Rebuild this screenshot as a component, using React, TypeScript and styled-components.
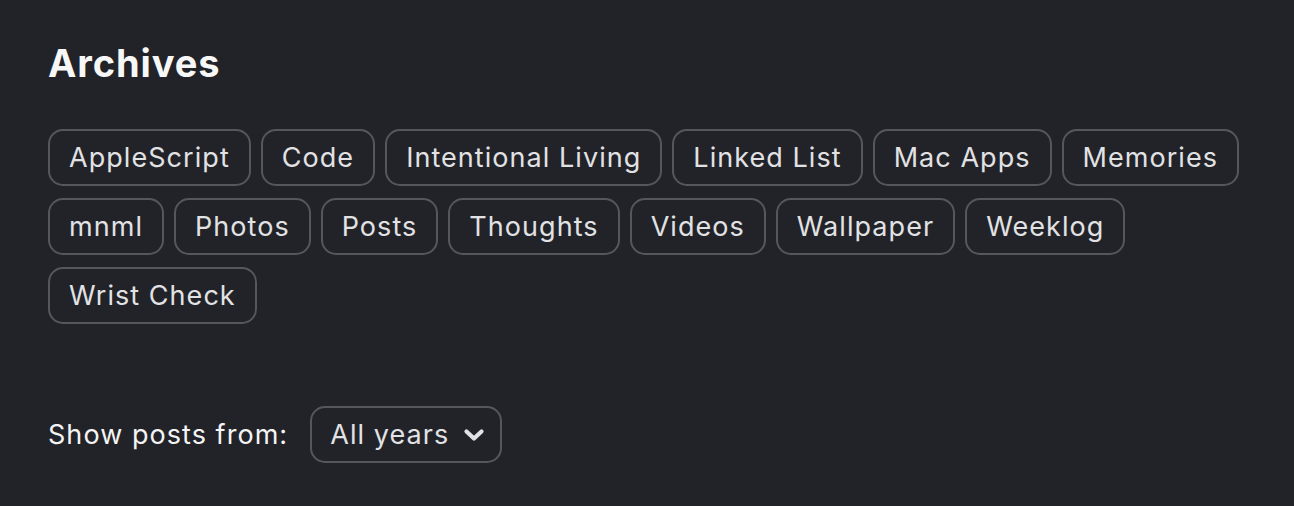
import styled, { createGlobalStyle } from 'styled-components';

const GlobalStyle = createGlobalStyle`
  html, body {
    margin: 0;
    padding: 0;
    background: #212329;
  }
  body {
    font-family: Inter, "Noto Sans", sans-serif;
  }
`;

const Page = styled.div`
  padding: 40px 48px 40px 48px;
  min-height: 506px;
  box-sizing: border-box;
  background: #212329;
`;

const Title = styled.h2`
  margin: 0 0 43px 0;
  font-size: 38px;
  font-weight: 700;
  letter-spacing: 0.9px;
  color: #f7f7f7;
  line-height: 46px;
`;

const TagList = styled.div`
  display: flex;
  flex-wrap: wrap;
  gap: 12px 10px;
  max-width: 1198px;
`;

const Tag = styled.a`
  display: inline-flex;
  align-items: center;
  height: 57px;
  box-sizing: border-box;
  padding: 0 19px;
  border: 2px solid #54575e;
  border-radius: 15px;
  color: #e2e2e4;
  font-size: 27px;
  letter-spacing: 1.05px;
  text-decoration: none;
`;

const FilterRow = styled.div`
  display: flex;
  align-items: center;
  gap: 22px;
  margin-top: 82px;
`;

const Label = styled.span`
  font-size: 27px;
  letter-spacing: 1.05px;
  color: #f4f4f4;
`;

const Select = styled.div`
  display: inline-flex;
  align-items: center;
  gap: 14px;
  height: 57px;
  box-sizing: border-box;
  padding: 0 15px 0 18px;
  border: 2px solid #54575e;
  border-radius: 15px;
  color: #e2e2e4;
  font-size: 27px;
  letter-spacing: 1.05px;
`;

const tags = [
  'AppleScript',
  'Code',
  'Intentional Living',
  'Linked List',
  'Mac Apps',
  'Memories',
  'mnml',
  'Photos',
  'Posts',
  'Thoughts',
  'Videos',
  'Wallpaper',
  'Weeklog',
  'Wrist Check',
];

export default function App() {
  return (
    <Page>
      <GlobalStyle />
      <Title>Archives</Title>
      <TagList>
        {tags.map((t) => (
          <Tag key={t} href="#">
            {t}
          </Tag>
        ))}
      </TagList>
      <FilterRow>
        <Label>Show posts from:</Label>
        <Select>
          All years
          <svg width="22" height="14" viewBox="0 0 22 14">
            <path
              d="M3.5 3.5 L11 10.5 L18.5 3.5"
              fill="none"
              stroke="#e2e2e4"
              strokeWidth="4.2"
              strokeLinecap="round"
              strokeLinejoin="round"
            />
          </svg>
        </Select>
      </FilterRow>
    </Page>
  );
}
